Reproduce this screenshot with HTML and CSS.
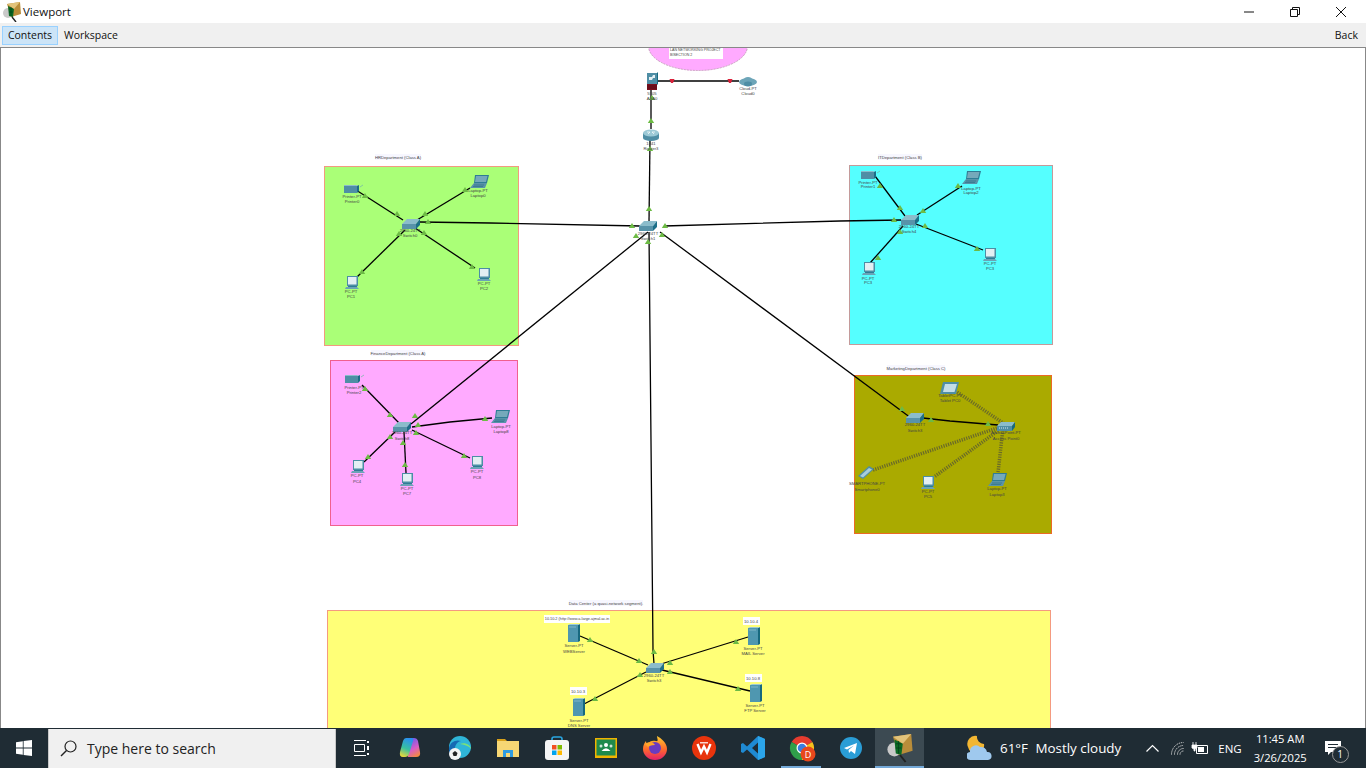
FILE: index.html
```html
<!DOCTYPE html>
<html>
<head>
    <meta charset="UTF-8">
    <title>Viewport</title>
    <link rel="stylesheet" href="styles.css">
</head>
<body>
    <div class="titlebar">
        <svg class="app-icon" width="18" height="20" viewBox="0 0 18 20"><use href="#pt-logo"/></svg>
        <span class="title-text">Viewport</span>
        <div class="win-buttons">
            <svg class="win-btn" width="12" height="12" viewBox="0 0 12 12"><path d="M1 6H11" stroke="#111" fill="none"/></svg>
            <svg class="win-btn" width="12" height="12" viewBox="0 0 12 12"><path d="M1.5 3.5H8.5V10.5H1.5zM3.5 3.5V1.5H10.5V8.5H8.5" stroke="#111" fill="none"/></svg>
            <svg class="win-btn" width="12" height="12" viewBox="0 0 12 12"><path d="M1 1 11 11M11 1 1 11" stroke="#111" fill="none"/></svg>
        </div>
    </div>

    <div class="tabbar">
        <span class="tab tab-active">Contents</span>
        <span class="tab">Workspace</span>
        <span class="back">Back</span>
    </div>

    <div class="canvas">
        <svg class="topology" width="1366" height="681" viewBox="0 47 1366 681">
            <defs>
                <path id="up" d="M0-3 3.2 2H-3.2z" fill="#6dbb45"/>
                <path id="down" d="M-2.5-2H2.5L1 2H-1z" fill="#d9213a"/>
                <g id="sw">
                    <path d="M0 5 5 0H18L14 5z" fill="#8bbccb"/>
                    <path d="M0 5H14V10H0z" fill="#5893a9"/>
                    <path d="M14 5 18 0V6L14 10z" fill="#1d6f88"/>
                </g>
                <g id="pc">
                    <path d="M2 0H13V10H2z" fill="#4c8ea5"/>
                    <path d="M3 1H11.5V8.5H3z" fill="#e3eff3"/>
                    <path d="M3 10H12V11H3z" fill="#2f7c95"/>
                    <path d="M1 11H12L14 13H0z" fill="#6ba3b6"/>
                </g>
                <g id="laptop">
                    <path d="M5 0H19L17 8H4z" fill="#2f7c95"/>
                    <path d="M6 1H17.5L16 7H5z" fill="#75a9bb"/>
                    <path d="M4 8H17L15 13H0z" fill="#5893a9"/>
                    <path d="M4 10H14M3 11.5H13" stroke="#2b6d84" stroke-width=".6"/>
                </g>
                <g id="printer">
                    <path d="M0 1H13V8H0z" fill="#4f8ea5"/>
                    <path d="M0 0H12L14 1H0z" fill="#8bbccb"/>
                    <path d="M13 1 15 0V6L13 8z" fill="#1d6f88"/>
                    <path d="M16 2 19 0" stroke="#7ba" stroke-width=".8"/>
                </g>
                <g id="server">
                    <path d="M0 1H10V18H0z" fill="#4f97b0"/>
                    <path d="M10 1 12 0V17L10 18z" fill="#17697f"/>
                    <path d="M0 1 2 0H12L10 1z" fill="#9cc9d6"/>
                    <path d="M1 3H8" stroke="#8fc0cf" stroke-width=".8"/>
                </g>
                <g id="router">
                    <path d="M0 4V9A8 3 0 0 0 16 9V4z" fill="#4f8ea5"/>
                    <ellipse cx="8" cy="4" rx="8" ry="3.5" fill="#9cc9d6"/>
                    <path d="M4 3H7L5 5M12 3H9L11 5" stroke="#fff" stroke-width=".7" fill="none"/>
                </g>
                <g id="cloud">
                    <ellipse cx="9" cy="5" rx="9" ry="4" fill="#6da5b8"/>
                    <ellipse cx="9" cy="3" rx="4" ry="3" fill="#6da5b8"/>
                    <ellipse cx="9" cy="7" rx="4" ry="2.4" fill="#4f8ea5"/>
                </g>
                <g id="asa">
                    <path d="M0 1H10V12H0z" fill="#4f8ea5"/>
                    <path d="M10 1 11 0V12L10 13z" fill="#17697f"/>
                    <path d="M2 5H5L6 3H8V6H6L5 8H2z" fill="#e3eff3"/>
                    <path d="M0 12H10V18H0z" fill="#7a0f1c"/>
                    <path d="M0 14H10M0 16H10" stroke="#3e0710" stroke-width=".5"/>
                </g>
                <g id="tablet">
                    <path d="M3 0H19L16 12H0z" fill="#4f8ea5"/>
                    <path d="M5 2H17L14.5 10H3z" fill="#c4dde6"/>
                </g>
                <g id="phone">
                    <path d="M0 10 11 0 16 3 5 13z" fill="#4f8ea5"/>
                    <path d="M2 10 11 2 14 3.5 5 11.5z" fill="#a8cdda"/>
                </g>
                <g id="ap">
                    <path d="M0 4 4 0H18L15 4z" fill="#8bbccb"/>
                    <path d="M0 4H15V9H0z" fill="#4f8ea5"/>
                    <path d="M15 4 18 0V5L15 9z" fill="#17697f"/>
                    <path d="M2 6H12" stroke="#d7e8ee" stroke-dasharray="1 1"/>
                </g>
            </defs>

            <!-- zones -->
            <ellipse class="zone-oval" cx="698" cy="46" rx="49.5" ry="24.5"/>
            <rect class="zone" x="324.5" y="166.5" width="194" height="179" fill="#aaff77" stroke="#f29a80"/>
            <rect class="zone" x="849.5" y="165.5" width="203" height="179" fill="#55ffff" stroke="#c49a9a"/>
            <rect class="zone" x="330.5" y="360.5" width="187" height="165" fill="#ffaaff" stroke="#f0608f"/>
            <rect class="zone" x="854.5" y="375.5" width="197" height="158" fill="#aaaa00" stroke="#ec6a24"/>
            <rect class="zone" x="327.5" y="610.5" width="723" height="130" fill="#ffff77" stroke="#f49a80"/>

            <!-- note boxes -->
            <rect class="note-white" x="669" y="47" width="54" height="12"/>
            <rect class="note" x="375" y="154" width="46" height="6"/>
            <rect class="note" x="878" y="154" width="44" height="6"/>
            <rect class="note" x="371" y="350" width="54" height="6"/>
            <rect class="note" x="887" y="365" width="58" height="6"/>
            <rect class="note" x="569" y="600" width="74" height="6"/>
            <rect class="note-white" x="544" y="615" width="66" height="8"/>
            <rect class="note-white" x="743" y="617" width="17" height="8"/>
            <rect class="note-white" x="745" y="674" width="17" height="8"/>
            <rect class="note-white" x="570" y="687" width="17" height="8"/>
            <text class="lbl lbl-left" x="670" y="49.500">LAN NETWORKING PROJECT</text>
            <text class="lbl lbl-left" x="670" y="54.500">BISECTION 2</text>
            <text class="lbl" x="398" y="157">HRDepartment (Class A)</text>
            <text class="lbl" x="900" y="157">ITDepartment (Class B)</text>
            <text class="lbl" x="398" y="353">FinanceDepartment (Class A)</text>
            <text class="lbl" x="916" y="368">MarketingDepartment (Class C)</text>
            <text class="lbl" x="606" y="603">Data Center (a quasi-network segment).</text>
            <text class="lbl lbl-small" x="577" y="619">10.10.2 (http://www.a.large.ajmal.ac.in</text>
            <text class="lbl" x="751" y="621">10.10.4</text>
            <text class="lbl" x="753" y="678">10.10.8</text>
            <text class="lbl" x="578" y="691">10.10.3</text>

            <!-- cables -->
            <g class="cable">
                <path d="M658 81H739"/>
                <path d="M651 90V129"/>
                <path d="M650 140 649 222"/>
                <path d="M420 222 490 223 640 226"/>
                <path d="M664 226 840 221 901 220"/>
                <path d="M411 424 648 232"/>
                <path d="M660 232 911 418"/>
                <path d="M649 232 653 650 654 664"/>
                <path d="M923 418 950 421 998 425"/>
                <path d="M356 190 403 220"/>
                <path d="M470 188 417 220"/>
                <path d="M357 277 405 230"/>
                <path d="M475 268 415 228"/>
                <path d="M875 176 905 216"/>
                <path d="M962 186 917 215"/>
                <path d="M870 263 903 226"/>
                <path d="M983 250 916 224"/>
                <path d="M362 385 399 423"/>
                <path d="M412 427 450 422 492 418"/>
                <path d="M364 462 395 432"/>
                <path d="M404 432 406 473"/>
                <path d="M412 430 470 458"/>
                <path d="M580 636 648 665"/>
                <path d="M748 637 661 664"/>
                <path d="M750 691 662 670"/>
                <path d="M584 704 646 672"/>
            </g>
            <g class="wireless">
                <path d="M1006 425 957 392"/>
                <path d="M1006 425 873 470"/>
                <path d="M1006 425 934 477"/>
                <path d="M1003 428 998 473"/>
            </g>

            <!-- link lights -->
            <use href="#down" x="672" y="81"/><use href="#down" x="730" y="81"/>
            <use href="#up" x="652" y="98"/><use href="#up" x="651" y="121"/><use href="#up" x="650" y="149"/>
            <use href="#up" x="649" y="209"/><use href="#up" x="632" y="226"/><use href="#up" x="665" y="226"/>
            <use href="#up" x="636" y="236"/><use href="#up" x="662" y="235"/><use href="#up" x="648" y="242"/>
            <use href="#up" x="365" y="196"/><use href="#up" x="397" y="214"/><use href="#up" x="465" y="190"/>
            <use href="#up" x="425" y="214"/><use href="#up" x="362" y="272"/><use href="#up" x="399" y="234"/>
            <use href="#up" x="472" y="267"/><use href="#up" x="424" y="233"/><use href="#up" x="428" y="222"/>
            <use href="#up" x="880" y="186"/><use href="#up" x="900" y="208"/><use href="#up" x="958" y="186"/>
            <use href="#up" x="923" y="211"/><use href="#up" x="878" y="258"/><use href="#up" x="900" y="232"/>
            <use href="#up" x="977" y="249"/><use href="#up" x="925" y="226"/><use href="#up" x="894" y="220"/>
            <use href="#up" x="365" y="389"/><use href="#up" x="390" y="415"/><use href="#up" x="415" y="416"/>
            <use href="#up" x="418" y="425"/><use href="#up" x="485" y="419"/><use href="#up" x="368" y="457"/>
            <use href="#up" x="390" y="437"/><use href="#up" x="403" y="443"/><use href="#up" x="405" y="465"/>
            <use href="#up" x="416" y="433"/><use href="#up" x="464" y="456"/>
            <use href="#up" x="902" y="409"/><use href="#up" x="931" y="420"/><use href="#up" x="988" y="424"/>
            <use href="#up" x="590" y="640"/><use href="#up" x="639" y="661"/><use href="#up" x="736" y="642"/>
            <use href="#up" x="670" y="663"/><use href="#up" x="738" y="689"/><use href="#up" x="670" y="672"/>
            <use href="#up" x="595" y="699"/><use href="#up" x="640" y="675"/><use href="#up" x="654" y="652"/>

            <!-- core devices -->
            <use href="#asa" x="647" y="72"/>
            <use href="#cloud" x="739" y="77"/>
            <use href="#router" x="643" y="129"/>
            <use href="#sw" x="639" y="221"/>
            <text class="lbl" x="748" y="88">Cloud-PT</text><text class="lbl" x="748" y="93">Cloud0</text>
            <text class="lbl" x="652" y="93">5505</text><text class="lbl" x="652" y="98">ASA0</text>
            <text class="lbl" x="651" y="143">1841</text><text class="lbl" x="651" y="148">Router3</text>
            <text class="lbl" x="648" y="233">2960-24TT</text><text class="lbl" x="648" y="238">Switch1</text>

            <!-- HR -->
            <use href="#sw" x="402" y="219"/>
            <use href="#printer" x="344" y="185"/>
            <use href="#laptop" x="470" y="175"/>
            <use href="#pc" x="345" y="276"/>
            <use href="#pc" x="477" y="268"/>
            <text class="lbl" x="410" y="230">2960-24TT</text><text class="lbl" x="410" y="235">Switch0</text>
            <text class="lbl" x="352" y="196">Printer-PT</text><text class="lbl" x="352" y="201">Printer0</text>
            <text class="lbl" x="478" y="190">Laptop-PT</text><text class="lbl" x="478" y="195">Laptop0</text>
            <text class="lbl" x="351" y="291">PC-PT</text><text class="lbl" x="351" y="296">PC1</text>
            <text class="lbl" x="484" y="283">PC-PT</text><text class="lbl" x="484" y="288">PC2</text>

            <!-- IT -->
            <use href="#sw" x="901" y="215"/>
            <use href="#printer" x="861" y="171"/>
            <use href="#laptop" x="962" y="171"/>
            <use href="#pc" x="862" y="262"/>
            <use href="#pc" x="983" y="248"/>
            <text class="lbl" x="909" y="226">2960-24TT</text><text class="lbl" x="909" y="231">Switch4</text>
            <text class="lbl" x="868" y="182">Printer-PT</text><text class="lbl" x="868" y="186">Printer1</text>
            <text class="lbl" x="971" y="188">Laptop-PT</text><text class="lbl" x="971" y="192">Laptop2</text>
            <text class="lbl" x="868" y="278">PC-PT</text><text class="lbl" x="868" y="282">PC3</text>
            <text class="lbl" x="990" y="263">PC-PT</text><text class="lbl" x="990" y="268">PC3</text>

            <!-- Finance -->
            <use href="#sw" x="393" y="422"/>
            <use href="#printer" x="345" y="375"/>
            <use href="#laptop" x="491" y="410"/>
            <use href="#pc" x="351" y="460"/>
            <use href="#pc" x="400" y="473"/>
            <use href="#pc" x="470" y="456"/>
            <text class="lbl" x="402" y="432">2960-24TT</text><text class="lbl" x="402" y="438">Switch8</text>
            <text class="lbl" x="354" y="387">Printer-PT</text><text class="lbl" x="354" y="392">Printer2</text>
            <text class="lbl" x="501" y="426">Laptop-PT</text><text class="lbl" x="501" y="431">Laptop8</text>
            <text class="lbl" x="357" y="475">PC-PT</text><text class="lbl" x="357" y="481">PC4</text>
            <text class="lbl" x="407" y="488">PC-PT</text><text class="lbl" x="407" y="493">PC7</text>
            <text class="lbl" x="477" y="471">PC-PT</text><text class="lbl" x="477" y="477">PC8</text>

            <!-- Marketing -->
            <use href="#sw" x="906" y="413"/>
            <use href="#ap" x="997" y="422"/>
            <use href="#tablet" x="940" y="382"/>
            <use href="#phone" x="858" y="466"/>
            <use href="#pc" x="921" y="476"/>
            <use href="#laptop" x="988" y="473"/>
            <text class="lbl" x="915" y="424">2960-24TT</text><text class="lbl" x="915" y="430">Switch3</text>
            <text class="lbl" x="1006" y="432">AccessPoint-PT</text><text class="lbl" x="1006" y="438">Access Point0</text>
            <text class="lbl" x="950" y="395">TabletPC-PT</text><text class="lbl" x="950" y="400">Tablet PC0</text>
            <text class="lbl" x="867" y="483">SMARTPHONE-PT</text><text class="lbl" x="867" y="489">Smartphone0</text>
            <text class="lbl" x="928" y="491">PC-PT</text><text class="lbl" x="928" y="496">PC5</text>
            <text class="lbl" x="997" y="488">Laptop-PT</text><text class="lbl" x="997" y="494">Laptop3</text>

            <!-- Data center -->
            <use href="#sw" x="646" y="663"/>
            <use href="#server" x="568" y="624"/>
            <use href="#server" x="748" y="627"/>
            <use href="#server" x="750" y="684"/>
            <use href="#server" x="573" y="698"/>
            <text class="lbl" x="654" y="675">2960-24TT</text><text class="lbl" x="654" y="680">Switch3</text>
            <text class="lbl" x="574" y="645">Server-PT</text><text class="lbl" x="574" y="651">WEBServer</text>
            <text class="lbl" x="753" y="648">Server-PT</text><text class="lbl" x="753" y="653">MAIL Server</text>
            <text class="lbl" x="755" y="705">Server-PT</text><text class="lbl" x="755" y="710">FTP Server</text>
            <text class="lbl" x="579" y="720">Server-PT</text><text class="lbl" x="579" y="725">DNS Server</text>
        </svg>
    </div>

    <div class="taskbar">
        <div class="start">
            <svg width="16" height="16" viewBox="0 0 16 16"><path d="M0 2.2 6.8 1.2V7.6H0zM7.6 1.1 16 0V7.6H7.6zM0 8.4H6.8V14.8L0 13.8zM7.6 8.4H16V16L7.6 14.9z" fill="#fff"/></svg>
        </div>
        <div class="search">
            <svg width="17" height="17" viewBox="0 0 17 17"><circle cx="10.5" cy="6.5" r="5.5" fill="none" stroke="#222" stroke-width="1.2"/><path d="M6.5 10.5 1 16" stroke="#222" stroke-width="1.4"/></svg>
            <span class="search-text">Type here to search</span>
        </div>
        <div class="tb-icons">
            <div class="tb-ic">
                <svg width="16" height="16" viewBox="0 0 16 16"><path d="M1 .5H13M1 15.5H13" stroke="#fff"/><path d="M1.5 4.5H11.5V11.5H1.5z" fill="none" stroke="#fff"/><path d="M14 1H16V3H14zM14 6H16V10H14zM14 13H16V15H14z" fill="#fff"/></svg>
            </div>
            <div class="tb-ic">
                <svg width="22" height="22" viewBox="0 0 22 22">
                    <defs>
                        <linearGradient id="cp1" x1="0.6" y1="0" x2="0.3" y2="1"><stop offset="0" stop-color="#2a8ff0"/><stop offset=".55" stop-color="#38c0a0"/><stop offset="1" stop-color="#e8d83a"/></linearGradient>
                        <linearGradient id="cp2" x1="0.3" y1="0" x2="0.7" y2="1"><stop offset="0" stop-color="#6a5be8"/><stop offset=".55" stop-color="#d85cc8"/><stop offset="1" stop-color="#f58a3c"/></linearGradient>
                    </defs>
                    <path d="M13 1H15Q18 1 19 4L21 15Q22 20 17 20H10Q8 20 9 18L13 5Q14 2 13 1z" fill="url(#cp2)"/>
                    <path d="M7 1H13Q15 1 14 4L10 17Q9 20 6 20H4Q0 20 1 15L4 4Q5 1 7 1z" fill="url(#cp1)"/>
                </svg>
            </div>
            <div class="tb-ic">
                <svg width="24" height="24" viewBox="0 0 24 24">
                    <circle cx="13" cy="11" r="11" fill="#2fb5d8"/>
                    <path d="M2 12C3 6 9 3 14 5 9 6 6 12 9 18 10 21 6 22 4 20 2 18 2 15 2 12z" fill="#1569b3"/>
                    <path d="M13 8C18 6 24 9 24 13 22 10 18 9 13 8z" fill="#7be07a"/>
                    <circle cx="8" cy="18" r="6" fill="#f3f3f3"/>
                    <path d="M8 15 10.500 17 9.500 20H6.500L5.500 17z" fill="#222"/>
                </svg>
            </div>
            <div class="tb-ic">
                <svg width="22" height="20" viewBox="0 0 22 20">
                    <path d="M0 1H8L10 3H0z" fill="#d9a21b"/>
                    <path d="M0 3H22V19H0z" fill="#f7d774"/>
                    <path d="M6 19V12H16V19H13V15H9V19z" fill="#2f9be0"/>
                </svg>
            </div>
            <div class="tb-ic">
                <svg width="24" height="24" viewBox="0 0 24 24">
                    <path d="M7 6V3Q7 1 9 1H15Q17 1 17 3V6" fill="none" stroke="#2aa5e0" stroke-width="1.6"/>
                    <rect y="4" width="24" height="20" rx="3" fill="#f5f5f5"/>
                    <path d="M7 9H11.500V13.500H7z" fill="#f25022"/><path d="M12.500 9H17V13.500H12.500z" fill="#7fba00"/>
                    <path d="M7 14.500H11.500V19H7z" fill="#00a4ef"/><path d="M12.500 14.500H17V19H12.500z" fill="#ffb900"/>
                </svg>
            </div>
            <div class="tb-ic">
                <svg width="22" height="20" viewBox="0 0 22 20">
                    <rect width="22" height="20" fill="#f0b400"/>
                    <rect x="1.500" y="1.500" width="19" height="16" fill="#1f8a4c"/>
                    <circle cx="11" cy="7" r="2" fill="#fff"/><circle cx="6" cy="8" r="1.500" fill="#cfe8d8"/><circle cx="16" cy="8" r="1.500" fill="#cfe8d8"/>
                    <path d="M6.500 13Q11 7.500 15.500 13z" fill="#fff"/>
                </svg>
            </div>
            <div class="tb-ic">
                <svg width="24" height="24" viewBox="0 0 24 24">
                    <defs><linearGradient id="ff" x1="0" y1="0" x2="0" y2="1"><stop offset="0" stop-color="#ffcb2f"/><stop offset=".55" stop-color="#ff6a2c"/><stop offset="1" stop-color="#e3206a"/></linearGradient></defs>
                    <path d="M14 0C18 2 24 7 24 13A12 11 0 0 1 0 13C0 10 1 7 3 5 3 7 4 8 5 8 6 5 10 4 13 5 16 6 14 2 14 0z" fill="url(#ff)"/>
                    <circle cx="12" cy="12" r="6" fill="#6a3bc0"/>
                    <path d="M2 8C5 5 11 6 12 9 8 9 6 10 5 11 4 10 3 9 2 8z" fill="#ffa62b"/>
                </svg>
            </div>
            <div class="tb-ic">
                <svg width="24" height="24" viewBox="0 0 24 24">
                    <circle cx="12" cy="12" r="12" fill="#e8340c"/>
                    <path d="M5.500 8 9 16.500 12 10.500 15 16.500 18.500 8" fill="none" stroke="#fff" stroke-width="2.400"/>
                    <path d="M8 6.800H16" stroke="#fff" stroke-width="1.200"/>
                </svg>
            </div>
            <div class="tb-ic">
                <svg width="24" height="24" viewBox="0 0 24 24">
                    <path d="M17 0 24 3V21L17 24 6 13.500 2 17 0 16V8L2 7 6 10.500zM17 6.500 11 12 17 17.500z" fill="#1f8ad2"/>
                    <path d="M17 0 24 3V21L17 24z" fill="#2ba5ea"/>
                </svg>
            </div>
            <div class="tb-ic tb-open">
                <svg width="24" height="24" viewBox="0 0 24 24">
                    <path d="M12 12 1.600 6A12 12 0 0 1 22.400 6z" fill="#e53c2f"/>
                    <path d="M12 12 22.400 6A12 12 0 0 1 12 24z" fill="#f7c11c"/>
                    <path d="M12 12 12 24A12 12 0 0 1 1.600 6z" fill="#2f9e4a"/>
                    <circle cx="12" cy="12" r="5.500" fill="#fff"/><circle cx="12" cy="12" r="4.300" fill="#3b7de0"/>
                    <circle cx="18" cy="18" r="7.500" fill="#e8481c"/>
                    <text class="badge-d" x="18" y="21.500">D</text>
                </svg>
            </div>
            <div class="tb-ic">
                <svg width="22" height="22" viewBox="0 0 22 22">
                    <circle cx="11" cy="11" r="11" fill="#2a9dd6"/>
                    <path d="M4 11 17 6 15 17 11 14 9 16 8.500 13 14 8.500 7 12.500z" fill="#fff"/>
                </svg>
            </div>
            <div class="tb-ic tb-active">
                <svg width="26" height="28" viewBox="0 0 18 20"><use href="#pt-logo"/></svg>
            </div>
        </div>
        <div class="tray">
            <svg class="weather-ic" width="25" height="26" viewBox="0 0 25 26">
                <path d="M10 1A8 8 0 0 0 1 12 8 8 0 0 0 17 9 7 7 0 0 1 10 1z" fill="#f2b632"/>
                <path d="M4 25A4 4 0 0 1 3 17 6 6 0 0 1 13 12 6 6 0 0 1 20 17 4 4 0 0 1 21 25z" fill="#9fc9ee"/>
            </svg>
            <span class="temp">61°F</span>
            <span class="cond">Mostly cloudy</span>
            <svg class="chev" width="13" height="8" viewBox="0 0 13 8"><path d="M.5 7.500 6.500 1.500 12.500 7.500" fill="none" stroke="#fff" stroke-width="1.200"/></svg>
            <svg class="wifi" width="13" height="13" viewBox="0 0 13 13"><path d="M.5 12.500A12 12 0 0 1 12.500 .5M3.500 12.500A9 9 0 0 1 12.500 3.500M6.500 12.500A6 6 0 0 1 12.500 6.500M9 12.500A3.500 3.500 0 0 1 12.500 9" fill="none" stroke="#ddd" stroke-dasharray="1.200 .8"/></svg>
            <svg class="batt" width="18" height="14" viewBox="0 0 18 14"><path d="M5.500 4.500H16.500V12.500H5.500z" fill="none" stroke="#fff"/><path d="M7 6H13V11H7z" fill="#fff"/><path d="M1 4H6V7L4 8V10H3V8L1 7zM2 1V4M5 1V4" fill="#fff" stroke="#fff" stroke-width=".8"/></svg>
            <span class="lang">ENG</span>
            <div class="clock"><span>11:45 AM</span><span>3/26/2025</span></div>
            <div class="notif">
                <svg width="17" height="15" viewBox="0 0 17 15"><path d="M0 0H16V11H6L3 14V11H0z" fill="#fff"/><path d="M3 3.500H13M3 6.500H13" stroke="#1f2c34"/></svg>
                <span class="notif-count">1</span>
            </div>
        </div>
    </div>

    <svg class="defs-only" width="0" height="0">
        <defs>
            <g id="pt-logo">
                <circle cx="5" cy="11" r="5" fill="#c9c9c9"/>
                <path d="M4 2 17 0 18 12 8 15z" fill="#b98d3a"/>
                <path d="M4 2 11 7 17 0z" fill="#e2c37a"/>
                <path d="M5 4 11 7 10 15 6 14z" fill="#0b6a24"/>
                <path d="M6 7H10M6 10H10M8 5V14" stroke="#02401a" stroke-width=".6"/>
                <path d="M9 15 13 20" stroke="#222" stroke-width="1.400"/>
            </g>
        </defs>
    </svg>
</body>
</html>
```

FILE: styles.css
```css
html, body {
    margin: 0;
    height: 100%;
    overflow: hidden;
}

body {
    width: 1366px;
    height: 768px;
    display: flex;
    flex-direction: column;
    font-family: "Open Sans", "Liberation Sans", sans-serif;
    background-color: #fff;
}

.titlebar {
    height: 23px;
    flex: none;
    display: flex;
    align-items: center;
    padding-left: 3px;
    background-color: #fff;
}

.app-icon {
    margin-right: 2px;
}

.title-text {
    font-size: 11.5px;
    color: #111;
}

.win-buttons {
    margin-left: auto;
    display: flex;
    gap: 34px;
    padding-right: 19px;
}

.tabbar {
    height: 24px;
    flex: none;
    display: flex;
    align-items: center;
    padding-left: 2px;
    background-color: #f0f0f0;
    font-size: 10.5px;
    color: #111;
}

.tab {
    width: 54px;
    height: 17px;
    line-height: 17px;
    text-align: center;
    border: 1px solid transparent;
}

.tab + .tab {
    width: auto;
    padding: 0 5px;
}

.tab-active {
    background-color: #cce4f7;
    border-color: #99d1ff;
}

.back {
    margin-left: auto;
    padding-right: 8px;
}

.canvas {
    height: 681px;
    flex: none;
    border-top: 1px solid #888;
    border-left: 1px solid #888;
    border-right: 1px solid #888;
    box-sizing: border-box;
    overflow: hidden;
    background-color: #fff;
}

.topology {
    display: block;
    margin: -1px 0 0 -1px;
}

.zone {
    stroke-width: 1;
}

.zone-oval {
    fill: #ffaaff;
    stroke: #c9a0c0;
    stroke-dasharray: 2 1;
}

.note {
    fill: #f7f7ff;
}

.note-white {
    fill: #fff;
}

.lbl {
    font-family: "Liberation Sans", sans-serif;
    font-size: 4.2px;
    fill: #444;
    text-anchor: middle;
    dominant-baseline: central;
}

.lbl-left {
    font-size: 3.6px;
    text-anchor: start;
}

.lbl-small {
    font-size: 3.8px;
}

.cable path {
    fill: none;
    stroke: #000;
    stroke-width: 1.3;
}

.wireless path {
    fill: none;
    stroke: #6a6a28;
    stroke-width: 3.5;
    stroke-dasharray: 1.2 1.2;
}

.taskbar {
    height: 40px;
    flex: none;
    display: flex;
    background-color: #1f2c34;
    color: #fff;
}

.start {
    width: 48px;
    display: flex;
    align-items: center;
    justify-content: center;
}

.search {
    width: 288px;
    margin-top: 1px;
    display: flex;
    align-items: center;
    gap: 10px;
    padding-left: 11px;
    box-sizing: border-box;
    background-color: #f0f0f0;
    border: 1px solid #c8c8c8;
    border-width: 0 1px;
}

.search-text {
    font-size: 14px;
    color: #222;
}

.tb-icons {
    display: flex;
}

.tb-ic {
    position: relative;
    width: 49px;
    display: flex;
    align-items: center;
    justify-content: center;
    box-sizing: border-box;
}

.tb-ic svg {
    overflow: visible;
}

.tb-open::after {
    content: "";
    position: absolute;
    left: 4px;
    right: 5px;
    bottom: 0;
    height: 2px;
    background-color: #74a9d8;
}

.tb-active {
    background-color: #3c4a52;
    box-shadow: inset 0 -2px 0 #74a9d8;
}

.badge-d {
    font-family: "Open Sans", sans-serif;
    font-size: 9px;
    fill: #fff;
    text-anchor: middle;
}

.tray {
    flex: 1;
    display: flex;
    align-items: center;
    font-size: 13.4px;
}

.weather-ic {
    margin-left: 43px;
}

.temp {
    margin-left: 8px;
}

.cond {
    margin-left: 7.5px;
}

.chev {
    margin-left: 25px;
}

.wifi {
    margin-left: 12px;
}

.batt {
    margin-left: 7px;
}

.lang {
    margin-left: 9px;
    font-size: 11.5px;
}

.clock {
    margin-left: 12px;
    display: flex;
    flex-direction: column;
    align-items: center;
    gap: 3px;
    font-size: 11.2px;
    line-height: 16px;
}

.notif {
    position: relative;
    margin-left: 18px;
    display: flex;
}

.notif-count {
    position: absolute;
    left: 7px;
    top: 5px;
    width: 15px;
    height: 15px;
    line-height: 15px;
    text-align: center;
    font-size: 10px;
    border-radius: 50%;
    border: 1px solid #999;
    background-color: #1f2c34;
}

.defs-only {
    position: absolute;
}
```
